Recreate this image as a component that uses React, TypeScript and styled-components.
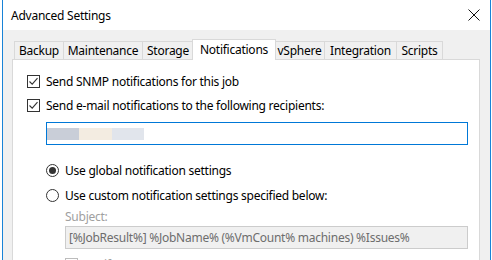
import React from "react";
import styled, { createGlobalStyle } from "styled-components";

const GlobalStyle = createGlobalStyle`
  html, body { margin: 0; padding: 0; background: #ffffff; }
  body { font-family: "Noto Sans", "Liberation Sans", sans-serif; font-size: 12px; letter-spacing: -0.25px; color: #000; }
  * { box-sizing: border-box; }
`;

const Desktop = styled.div`
  display: flex;
  width: 492px;
  height: 260px;
  overflow: hidden;
  background: #ffffff;
`;

const DesktopEdge = styled.div`
  width: 2px;
  flex: none;
`;

const Window = styled.div`
  width: 489px;
  flex: none;
  display: flex;
  flex-direction: column;
  border-left: 1px solid #1883d7;
  border-right: 1px solid #1883d7;
  background: #f0f0f0;
`;

const TitleBar = styled.div`
  height: 30px;
  flex: none;
  display: flex;
  align-items: center;
  justify-content: space-between;
  background: #ffffff;
  padding: 0 9px 0 8px;
`;

const Title = styled.span`
  font-size: 12px;
  color: #000;
`;

const CloseButton = styled.div`
  width: 14px;
  height: 14px;
  display: flex;
  align-items: center;
  justify-content: center;
`;

const Body = styled.div`
  flex: 1;
  display: flex;
  flex-direction: column;
  padding: 9px 10px 0 9px;
`;

const TabStrip = styled.div`
  display: flex;
  align-items: flex-end;
  height: 21px;
  margin-left: 2px;
  position: relative;
  z-index: 1;
`;

const Tab = styled.div<{ $active?: boolean; $w: number }>`
  width: ${(p) => p.$w}px;
  height: ${(p) => (p.$active ? 21 : 19)}px;
  display: flex;
  align-items: center;
  justify-content: center;
  background: ${(p) => (p.$active ? "#ffffff" : "#f0f0f0")};
  border: 1px solid #d9d9d9;
  border-bottom: ${(p) => (p.$active ? "none" : "1px solid #d9d9d9")};
  margin-left: ${(p) => (p.$active ? -2 : -1)}px;
  margin-right: ${(p) => (p.$active ? -1 : 0)}px;
  padding-bottom: ${(p) => (p.$active ? 2 : 0)}px;
  position: relative;
  z-index: ${(p) => (p.$active ? 2 : 1)};
  white-space: nowrap;
  &:first-child { margin-left: 0; }
`;

const Panel = styled.div`
  flex: 1;
  margin-top: -1px;
  background: #ffffff;
  border: 1px solid #d9d9d9;
  border-bottom: none;
  padding: 9px 11px 0 14px;
  display: flex;
  flex-direction: column;
`;

const CheckRow = styled.div<{ $disabled?: boolean }>`
  display: flex;
  align-items: center;
  height: 24px;
  gap: 6px;
  color: ${(p) => (p.$disabled ? "#a0a0a0" : "#000")};
  white-space: nowrap;
`;

const Box = styled.span<{ $disabled?: boolean }>`
  width: 13px;
  height: 13px;
  flex: none;
  border: 1px solid ${(p) => (p.$disabled ? "#bcbcbc" : "#333333")};
  background: #fff;
  display: flex;
  align-items: center;
  justify-content: center;
`;

const EmailInput = styled.div`
  margin: 5px 0 0 19px;
  height: 23px;
  border: 1px solid #0078d7;
  background: #fff;
  display: flex;
  align-items: center;
`;

const Blur = styled.span<{ $c: string; $w: number }>`
  width: ${(p) => p.$w}px;
  height: 12px;
  background: ${(p) => p.$c};
  flex: none;
`;

const RadioGroup = styled.div`
  margin: 13px 0 0 19px;
  display: flex;
  flex-direction: column;
`;

const RadioRow = styled.div`
  display: flex;
  align-items: center;
  height: 25px;
  gap: 6px;
  white-space: nowrap;
`;

const RadioCircle = styled.span<{ $on?: boolean }>`
  width: 13px;
  height: 13px;
  flex: none;
  border-radius: 50%;
  border: 1px solid #333333;
  background: #fff;
  display: flex;
  align-items: center;
  justify-content: center;
  &::after {
    content: "";
    display: ${(p) => (p.$on ? "block" : "none")};
    width: 7px;
    height: 7px;
    border-radius: 50%;
    background: #333333;
  }
`;

const SubBlock = styled.div`
  margin-left: 19px;
  display: flex;
  flex-direction: column;
`;

const SubLabel = styled.div`
  color: #a0a0a0;
  height: 16px;
  display: flex;
  align-items: center;
`;

const SubjectInput = styled.div`
  margin-top: 2px;
  height: 23px;
  border: 1px solid #cccccc;
  background: #f0f0f0;
  color: #6d6d6d;
  display: flex;
  align-items: center;
  padding-left: 3px;
  white-space: nowrap;
`;

const SubChecks = styled.div`
  margin-top: 3px;
`;

const Check = () => (
  <svg width="11" height="11" viewBox="0 0 11 11">
    <path d="M1.5 5.5 L4.2 8.2 L9.5 2.2" fill="none" stroke="#333" strokeWidth="1.1" />
  </svg>
);

const tabs: { label: string; w: number; active?: boolean }[] = [
  { label: "Backup", w: 50 },
  { label: "Maintenance", w: 80 },
  { label: "Storage", w: 52 },
  { label: "Notifications", w: 84, active: true },
  { label: "vSphere", w: 51 },
  { label: "Integration", w: 73 },
  { label: "Scripts", w: 47 },
];

export default function App() {
  return (
    <>
      <GlobalStyle />
      <Desktop>
        <DesktopEdge />
        <Window>
          <TitleBar>
            <Title>Advanced Settings</Title>
            <CloseButton>
              <svg width="12" height="12" viewBox="0 0 12 12">
                <path d="M0.5 0.5 L11.5 11.5 M11.5 0.5 L0.5 11.5" stroke="#111" strokeWidth="1" />
              </svg>
            </CloseButton>
          </TitleBar>
          <Body>
            <TabStrip>
              {tabs.map((t) => (
                <Tab key={t.label} $active={t.active} $w={t.w}>
                  {t.label}
                </Tab>
              ))}
            </TabStrip>
            <Panel>
              <CheckRow>
                <Box><Check /></Box>
                Send SNMP notifications for this job
              </CheckRow>
              <CheckRow>
                <Box><Check /></Box>
                Send e-mail notifications to the following recipients:
              </CheckRow>
              <EmailInput>
                <Blur $c="#c9ced8" $w={32} />
                <Blur $c="#f3ece1" $w={33} />
                <Blur $c="#e1e5ec" $w={32} />
              </EmailInput>
              <RadioGroup>
                <RadioRow>
                  <RadioCircle $on />
                  Use global notification settings
                </RadioRow>
                <RadioRow>
                  <RadioCircle />
                  Use custom notification settings specified below:
                </RadioRow>
                <SubBlock>
                  <SubLabel>Subject:</SubLabel>
                  <SubjectInput>[%JobResult%] %JobName% (%VmCount% machines) %Issues%</SubjectInput>
                  <SubChecks>
                    <CheckRow $disabled>
                      <Box $disabled />
                      Notify on success
                    </CheckRow>
                  </SubChecks>
                </SubBlock>
              </RadioGroup>
            </Panel>
          </Body>
        </Window>
      </Desktop>
    </>
  );
}
